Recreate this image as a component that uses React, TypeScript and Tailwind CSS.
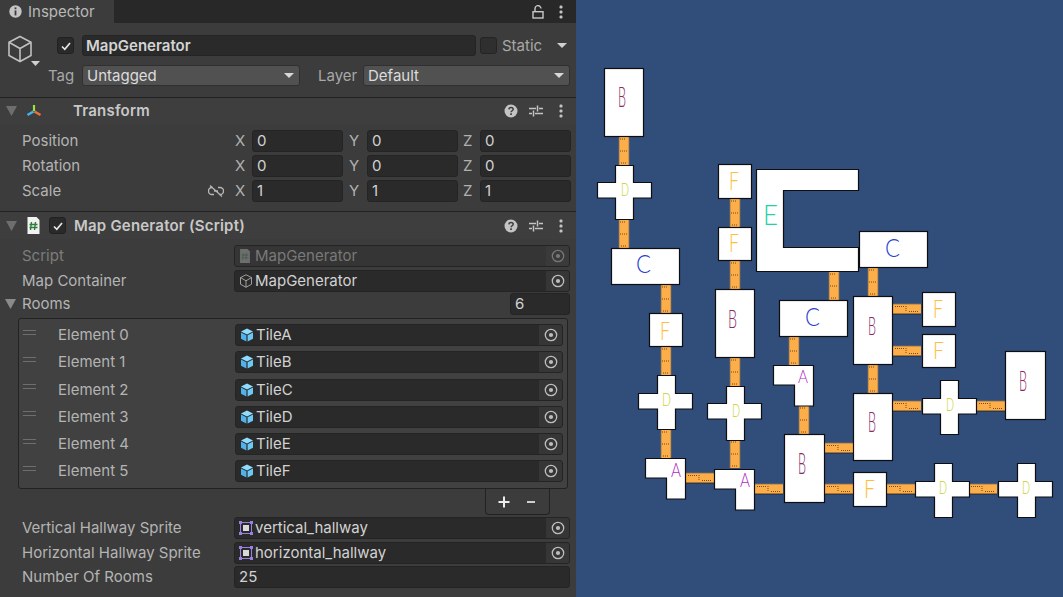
import type { ReactNode } from "react";

const ROOMS = [
  { x: 604, y: 68, w: 40, h: 69 },
  { x: 611, y: 248, w: 69, h: 37 },
  { x: 649, y: 313, w: 34, h: 34 },
  { x: 718, y: 164, w: 34, h: 35 },
  { x: 718, y: 227, w: 34, h: 34 },
  { x: 715, y: 289, w: 40, h: 69 },
  { x: 779, y: 300, w: 69, h: 37 },
  { x: 859, y: 231, w: 69, h: 37 },
  { x: 853, y: 296, w: 40, h: 69 },
  { x: 922, y: 292, w: 34, h: 35 },
  { x: 922, y: 334, w: 34, h: 34 },
  { x: 853, y: 393, w: 40, h: 68 },
  { x: 1005, y: 351, w: 41, h: 69 },
  { x: 784, y: 434, w: 41, h: 69 },
  { x: 853, y: 472, w: 34, h: 35 },
];

// cross centre bar + vertical bar
const CROSSES = [
  { x: 597, y: 165, vx: 615, hy: 182 },
  { x: 638, y: 375, vx: 657, hy: 393 },
  { x: 707, y: 386, vx: 726, hy: 403 },
  { x: 922, y: 380, vx: 940, hy: 398 },
  { x: 915, y: 463, vx: 934, hy: 481 },
  { x: 998, y: 463, vx: 1017, hy: 481 },
];

const ELBOWS = [
  { x: 773, y: 365 },
  { x: 645, y: 458 },
  { x: 714, y: 469 },
];

const V_HALLS = [
  [619, 137], [619, 220], [661, 285], [661, 347], [661, 430], [730, 199], [730, 261],
  [730, 358], [730, 440], [789, 337], [799, 406], [829, 272], [868, 268], [868, 365],
];

const H_HALLS = [
  [686, 473], [755, 484], [825, 443], [825, 484], [887, 484], [969, 484],
  [893, 304], [893, 346], [893, 401], [977, 401],
];

const LETTERS = [
  { t: "B", x: 618, y: 107, w: 8, h: 20, c: "#8b2a66" },
  { t: "D", x: 621, y: 196, w: 8, h: 13, c: "#c4cf20" },
  { t: "C", x: 636, y: 273, w: 15, h: 18, c: "#2c3fd0" },
  { t: "F", x: 660, y: 340, w: 10, h: 18, c: "#fdbe3a" },
  { t: "F", x: 729, y: 190, w: 10, h: 18, c: "#fdbe3a" },
  { t: "F", x: 729, y: 252, w: 10, h: 18, c: "#fdbe3a" },
  { t: "E", x: 763, y: 225, w: 15, h: 20, c: "#22d3a0" },
  { t: "B", x: 728, y: 328, w: 9, h: 19, c: "#8b2a66" },
  { t: "C", x: 805, y: 326, w: 15, h: 19, c: "#2c3fd0" },
  { t: "C", x: 885, y: 257, w: 15, h: 19, c: "#2c3fd0" },
  { t: "B", x: 868, y: 335, w: 8, h: 19, c: "#8b2a66" },
  { t: "F", x: 933, y: 318, w: 10, h: 18, c: "#fdbe3a" },
  { t: "F", x: 933, y: 359, w: 11, h: 17, c: "#fdbe3a" },
  { t: "B", x: 868, y: 432, w: 8, h: 20, c: "#8b2a66" },
  { t: "D", x: 946, y: 411, w: 8, h: 13, c: "#c4cf20" },
  { t: "B", x: 1019, y: 391, w: 8, h: 20, c: "#8b2a66" },
  { t: "D", x: 662, y: 406, w: 9, h: 13, c: "#c4cf20" },
  { t: "D", x: 732, y: 417, w: 8, h: 13, c: "#c4cf20" },
  { t: "A", x: 798, y: 383, w: 10, h: 13, c: "#b02cc4" },
  { t: "A", x: 671, y: 477, w: 10, h: 14, c: "#b02cc4" },
  { t: "A", x: 740, y: 487, w: 10, h: 14, c: "#b02cc4" },
  { t: "B", x: 798, y: 474, w: 8, h: 21, c: "#8b2a66" },
  { t: "F", x: 864, y: 498, w: 11, h: 18, c: "#fdbe3a" },
  { t: "D", x: 939, y: 494, w: 8, h: 12, c: "#c4cf20" },
  { t: "D", x: 1022, y: 494, w: 8, h: 12, c: "#c4cf20" },
];

function HallV({ x, y }: { x: number; y: number }) {
  return (
    <g>
      <rect x={x} y={y} width={10} height={28} fill="#fdae49" />
      <path d={`M${x} ${y}v28M${x + 10} ${y}v28`} stroke="#7d6f58" strokeWidth={0.8} />
      <path
        d={`M${x + 1} ${y + 2}h6M${x + 1} ${y + 14}h8M${x + 2} ${y + 26}h6`}
        stroke="#4a3618"
        strokeWidth={0.8}
        strokeDasharray="1 1"
      />
    </g>
  );
}

function HallH({ x, y }: { x: number; y: number }) {
  return (
    <g>
      <rect x={x} y={y} width={28} height={10} fill="#fdae49" />
      <path d={`M${x} ${y}h28`} stroke="#7d6f58" strokeWidth={0.8} />
      <path d={`M${x} ${y + 10}h28`} stroke="#1c1c1c" strokeWidth={0.8} />
      <path
        d={`M${x + 2} ${y + 2.500}h9M${x + 13} ${y + 2}v6M${x + 16} ${y + 7.500}h10`}
        stroke="#4a3618"
        strokeWidth={0.8}
        strokeDasharray="1 1"
      />
    </g>
  );
}

function MapView() {
  return (
    <svg viewBox="576 0 487 597" className="block h-full w-full">
      {V_HALLS.map(([x, y]) => (
        <HallV key={`v${x}-${y}`} x={x} y={y} />
      ))}
      {H_HALLS.map(([x, y]) => (
        <HallH key={`h${x}-${y}`} x={x} y={y} />
      ))}
      <g fill="#ffffff" stroke="#0d0d12" strokeWidth={1.2}>
        {ROOMS.map((r) => (
          <rect key={`${r.x}-${r.y}`} x={r.x + 0.5} y={r.y + 0.5} width={r.w - 1} height={r.h - 1} />
        ))}
        {CROSSES.map((c) => {
          const l = c.x + 0.5;
          const r = c.x + 54.5;
          const t = c.y + 0.5;
          const b = c.y + 54.5;
          const v1 = c.vx + 0.5;
          const v2 = c.vx + 18.5;
          const h1 = c.hy + 0.5;
          const h2 = c.hy + 16;
          return (
            <polygon
              key={`${c.x}-${c.y}`}
              points={`${v1},${t} ${v2},${t} ${v2},${h1} ${r},${h1} ${r},${h2} ${v2},${h2} ${v2},${b} ${v1},${b} ${v1},${h2} ${l},${h2} ${l},${h1} ${v1},${h1}`}
            />
          );
        })}
        {ELBOWS.map((e) => {
          const l = e.x + 0.5;
          const r = e.x + 40.5;
          const t = e.y + 0.5;
          return (
            <polygon
              key={`${e.x}-${e.y}`}
              points={`${l},${t} ${r},${t} ${r},${t + 40.5} ${l + 21},${t + 40.5} ${l + 21},${t + 19.5} ${l},${t + 19.5}`}
            />
          );
        })}
        <polygon points="756.5,169.5 858.5,169.5 858.5,190.5 783.5,190.5 783.5,247.5 858.5,247.5 858.5,271.5 756.5,271.5" />
      </g>
      {LETTERS.map((l) => (
        <text
          key={`${l.t}-${l.x}-${l.y}`}
          x={l.x}
          y={l.y}
          fill={l.c}
          fontFamily="Lato, Inter, sans-serif"
          fontWeight={300}
          fontSize={l.h / 0.72}
          textLength={l.w}
          lengthAdjust="spacingAndGlyphs"
        >
          {l.t}
        </text>
      ))}
    </svg>
  );
}

function Tri({ className = "" }: { className?: string }) {
  return (
    <svg viewBox="0 0 10 8" preserveAspectRatio="none" className={className}>
      <polygon points="0,0 10,0 5,8" fill="currentColor" />
    </svg>
  );
}

function Target({ dim = false }: { dim?: boolean }) {
  return (
    <svg viewBox="0 0 14 14" className={`h-[14px] w-[14px] ${dim ? "text-[#777]" : "text-[#bdbdbd]"}`}>
      <circle cx="7" cy="7" r="5.7" fill="none" stroke="currentColor" strokeWidth="1.3" />
      <circle cx="7" cy="7" r="2.1" fill="currentColor" />
    </svg>
  );
}

function Check() {
  return (
    <span className="flex h-[17px] w-[17px] items-center justify-center rounded-[3px] border border-[#212121] bg-[#2a2a2a]">
      <svg viewBox="0 0 12 12" className="h-[12px] w-[12px]">
        <path d="M2 6.5l2.8 2.8L10 3" fill="none" stroke="#e6e6e6" strokeWidth="1.7" />
      </svg>
    </span>
  );
}

function Field({ children, target, dim, className = "" }: { children?: ReactNode; target?: boolean; dim?: boolean; className?: string }) {
  return (
    <div
      className={`flex h-[22px] items-center overflow-hidden rounded-[3px] border border-[#242424] ${dim ? "bg-[#353535] text-[#797979]" : "bg-[#2a2a2a] text-[#d2d2d2]"} ${className}`}
    >
      <div className="flex min-w-0 flex-1 items-center gap-[2px] pl-[4px]">{children}</div>
      {target && (
        <div className={`flex h-full w-[23px] items-center justify-center ${dim ? "bg-[#3a3a3a]" : "bg-[#363636]"}`}>
          <Target dim={dim} />
        </div>
      )}
    </div>
  );
}

function Dropdown({ value, className = "" }: { value: string; className?: string }) {
  return (
    <div className={`flex h-[21px] items-center justify-between rounded-[3px] border border-[#303030] bg-[#515151] pl-[4px] pr-[5px] text-[#dcdcdc] ${className}`}>
      <span>{value}</span>
      <Tri className="h-[5px] w-[10px] text-[#d8d8d8]" />
    </div>
  );
}

function HeaderIcons() {
  return (
    <div className="ml-auto flex items-center pr-[13px] text-[#c4c4c4]">
      <svg viewBox="0 0 14 14" className="h-[14px] w-[14px]">
        <circle cx="7" cy="7" r="6.5" fill="#c4c4c4" />
        <path d="M4.9 5.4c.1-1.3 1-2 2.2-2 1.2 0 2.1.7 2.1 1.8 0 1.5-2.1 1.6-2.1 3.1" fill="none" stroke="#3e3e3e" strokeWidth="1.5" />
        <rect x="6.2" y="9.3" width="1.7" height="1.7" fill="#3e3e3e" />
      </svg>
      <svg viewBox="0 0 14 14" className="ml-[11px] h-[14px] w-[14px]">
        <path d="M0 4.5h7M10 4.5h4M0 9.5h3M6 9.5h8M8.5 1.5v6M4.5 6.5v6" fill="none" stroke="#c4c4c4" strokeWidth="1.5" />
      </svg>
      <Dots className="ml-[16px]" />
    </div>
  );
}

function Dots({ className = "" }: { className?: string }) {
  return (
    <svg viewBox="0 0 4 14" className={`h-[14px] w-[4px] ${className}`}>
      <rect x="0.5" y="0.5" width="3" height="3" rx="1.2" fill="#c4c4c4" />
      <rect x="0.5" y="5.5" width="3" height="3" rx="1.2" fill="#c4c4c4" />
      <rect x="0.5" y="10.5" width="3" height="3" rx="1.2" fill="#c4c4c4" />
    </svg>
  );
}

function CubeOutline({ className = "" }: { className?: string }) {
  return (
    <svg viewBox="0 0 26 28" className={className}>
      <path
        d="M13 1.5l11 5.7v13.3L13 26.500 2 20.500V7.200zM2 7.200l11 6.300 11-6.300M13 13.500v13"
        fill="none"
        stroke="currentColor"
        strokeWidth="1.6"
      />
    </svg>
  );
}

function Prefab() {
  return (
    <svg viewBox="0 0 14 14" className="h-[14px] w-[14px] shrink-0">
      <polygon points="7,0.5 13,3.500 7,6.500 1,3.500" fill="#8fdcff" />
      <polygon points="1,4.500 6.400,7.300 6.400,13.500 1,10.700" fill="#4fb3ea" />
      <polygon points="13,4.500 7.600,7.300 7.600,13.500 13,10.700" fill="#6cc8f5" />
    </svg>
  );
}

function SpriteIcon() {
  return (
    <svg viewBox="0 0 14 14" className="h-[14px] w-[14px] shrink-0">
      <rect x="1.5" y="1.5" width="11" height="11" fill="none" stroke="#9a7ee0" strokeWidth="1" />
      <rect x="4" y="4" width="6" height="6" fill="#d8d8d8" />
      <g fill="#9a7ee0">
        <rect x="0" y="0" width="3" height="3" />
        <rect x="11" y="0" width="3" height="3" />
        <rect x="0" y="11" width="3" height="3" />
        <rect x="11" y="11" width="3" height="3" />
      </g>
    </svg>
  );
}

function ScriptIcon({ dim = false }: { dim?: boolean }) {
  return (
    <svg viewBox="0 0 14 17" className="h-full w-full">
      <path d="M1 0h9l3 3v14H1z" fill={dim ? "#6e6e6e" : "#f2f2f2"} />
      <path d="M5 5l-1 8M9 5l-1 8M3 7.500h8M3 10.500h8" fill="none" stroke={dim ? "#4f5f50" : "#2f7d3b"} strokeWidth="1.4" />
    </svg>
  );
}

function PropLabel({ children, dim }: { children: ReactNode; dim?: boolean }) {
  return <span className={`w-[212px] shrink-0 ${dim ? "text-[#7d7d7d]" : "text-[#b4b4b4]"}`}>{children}</span>;
}

function Axis({ label, value, w }: { label: string; value: string; w: string }) {
  return (
    <>
      <span className={`${w} shrink-0 text-[#b0b0b0]`}>{label}</span>
      <Field className="w-[91px]">{value}</Field>
    </>
  );
}

function VectorRow({ label, value, unlink }: { label: string; value: string; unlink?: boolean }) {
  return (
    <div className="flex h-[25px] items-center pl-[22px]">
      <span className="flex w-[213px] shrink-0 items-center justify-between pr-[11px] text-[#b4b4b4]">
        {label}
        {unlink && (
          <svg viewBox="0 0 16 12" className="h-[12px] w-[16px]">
            <path d="M5 2.500H4a3.500 3.500 0 000 7h2M11 9.500h1a3.500 3.500 0 000-7h-2M6 6h4M2 0.500l12 11" fill="none" stroke="#b8b8b8" strokeWidth="1.3" />
          </svg>
        )}
      </span>
      <Axis label="X" value={value} w="w-[17px]" />
      <span className="w-[6px]" />
      <Axis label="Y" value={value} w="w-[18px]" />
      <span className="w-[5px]" />
      <Axis label="Z" value={value} w="w-[17px]" />
    </div>
  );
}

const ELEMENTS = ["TileA", "TileB", "TileC", "TileD", "TileE", "TileF"];

function Inspector() {
  return (
    <div className="flex h-[597px] w-[576px] shrink-0 flex-col overflow-hidden bg-[#3c3c3c] font-[Inter,sans-serif] text-[15px] leading-[18px]">
      {/* Tab bar */}
      <div className="flex h-[23px] shrink-0 items-center bg-[#282828]">
        <div className="flex h-full w-[114px] items-center gap-[6px] bg-[#3c3c3c] pl-[9px] text-[#c4c4c4]">
          <svg viewBox="0 0 13 13" className="h-[13px] w-[13px]">
            <circle cx="6.500" cy="6.500" r="6.200" fill="#c4c4c4" />
            <rect x="5.600" y="2.400" width="1.800" height="1.800" fill="#3c3c3c" />
            <rect x="5.600" y="5.400" width="1.800" height="5" fill="#3c3c3c" />
          </svg>
          <span className="text-[#b8b8b8]">Inspector</span>
        </div>
        <div className="ml-auto flex items-center gap-[15px] pr-[13px]">
          <svg viewBox="0 0 12 14" className="h-[14px] w-[12px]">
            <path d="M3 6.500V3.800a3 3 0 016-0.300" fill="none" stroke="#c8c8c8" strokeWidth="1.4" />
            <rect x="1" y="6.700" width="10" height="6.300" fill="none" stroke="#c8c8c8" strokeWidth="1.400" />
          </svg>
          <Dots />
        </div>
      </div>

      {/* GameObject header */}
      <div className="flex h-[75px] shrink-0 border-b border-[#222] pt-[12px]">
        <div className="relative ml-[7px] w-[28px] shrink-0">
          <CubeOutline className="h-[28px] w-[26px] text-[#c0c0c0]" />
          <Tri className="absolute left-[24px] top-[26px] h-[5px] w-[9px] text-[#d0d0d0]" />
        </div>
        <div className="flex flex-1 flex-col gap-[9px] pr-[6px]">
          <div className="flex h-[21px] items-center">
            <span className="ml-[22px]"><Check /></span>
            <div className="ml-[8px] flex h-[21px] w-[394px] items-center rounded-[3px] border border-[#242424] bg-[#2a2a2a] pl-[3px] font-semibold text-[#d4d4d4]">
              MapGenerator
            </div>
            <span className="ml-[4px] h-[17px] w-[17px] rounded-[3px] border border-[#242424] bg-[#2f2f2f]" />
            <span className="ml-[5px] text-[#a8a8a8]">Static</span>
            <Tri className="ml-[15px] h-[5px] w-[10px] text-[#d0d0d0]" />
          </div>
          <div className="flex h-[21px] items-center">
            <span className="ml-[13px] w-[34px] text-[#a8a8a8]">Tag</span>
            <Dropdown value="Untagged" className="w-[218px]" />
            <span className="ml-[18px] w-[45px] text-[#a8a8a8]">Layer</span>
            <Dropdown value="Default" className="w-[207px]" />
          </div>
        </div>
      </div>

      {/* Transform */}
      <div className="flex h-[26px] shrink-0 items-center bg-[#3e3e3e]">
        <Tri className="ml-[6px] h-[10px] w-[11px] text-[#6e6e6e]" />
        <svg viewBox="0 0 16 14" className="ml-[9px] h-[14px] w-[16px]">
          <path d="M8 7V1" stroke="#9de23c" strokeWidth="2.200" />
          <path d="M7.500 7.500L1.500 11" stroke="#3fb6f0" strokeWidth="2.500" />
          <path d="M8.500 7.500L14.500 11" stroke="#f0703c" strokeWidth="2.500" />
        </svg>
        <span className="ml-[31px] font-semibold tracking-[0.2px] text-[#c8c8c8]">Transform</span>
        <HeaderIcons />
      </div>
      <div className="flex h-[88px] shrink-0 flex-col border-b border-[#222] pt-[4px]">
        <VectorRow label="Position" value="0" />
        <VectorRow label="Rotation" value="0" />
        <VectorRow label="Scale" value="1" unlink />
      </div>

      {/* Script component */}
      <div className="flex h-[27px] shrink-0 items-center bg-[#3e3e3e]">
        <Tri className="ml-[6px] h-[10px] w-[11px] text-[#6e6e6e]" />
        <span className="ml-[9px] h-[17px] w-[15px]"><ScriptIcon /></span>
        <span className="ml-[8px]"><Check /></span>
        <span className="ml-[8px] font-semibold tracking-[0.2px] text-[#c8c8c8]">Map Generator (Script)</span>
        <HeaderIcons />
      </div>
      <div className="flex flex-col pt-[4px]">
        <div className="flex h-[25px] items-center pl-[22px] pr-[6px]">
          <PropLabel dim>Script</PropLabel>
          <Field dim target className="flex-1">
            <span className="h-[14px] w-[12px] shrink-0"><ScriptIcon dim /></span>
            <span className="ml-[2px]">MapGenerator</span>
          </Field>
        </div>
        <div className="flex h-[25px] items-center pl-[22px] pr-[6px]">
          <PropLabel>Map Container</PropLabel>
          <Field target className="flex-1">
            <CubeOutline className="h-[14px] w-[14px] shrink-0 text-[#bdbdbd]" />
            MapGenerator
          </Field>
        </div>
        <div className="flex h-[22px] items-center pr-[6px]">
          <Tri className="ml-[5px] h-[10px] w-[11px] text-[#8a8a8a]" />
          <span className="ml-[6px] text-[#b4b4b4]">Rooms</span>
          <Field className="ml-auto w-[60px]">6</Field>
        </div>

        {/* Reorderable list */}
        <div className="ml-[18px] mt-[3px] flex h-[171px] w-[550px] flex-col gap-[5.300px] rounded-[3px] border border-[#222] bg-[#414141] pt-[5px]">
          {ELEMENTS.map((name, i) => (
            <div key={name} className="flex h-[22px] items-center pl-[4px] pr-[4px]">
              <span className="mb-[6px] h-[5px] w-[13px] border-y border-[#6e6e6e]" />
              <span className="ml-[22px] w-[177px] text-[#b4b4b4]">Element {i}</span>
              <Field target className="flex-1">
                <Prefab />
                {name}
              </Field>
            </div>
          ))}
        </div>
        <div className="ml-[485px] flex h-[26px] w-[65px] items-center rounded-b-[4px] border-x border-b border-[#222] bg-[#3c3c3c] pl-[12px] font-semibold text-[#e8e8e8]">
          <svg viewBox="0 0 12 12" className="h-[12px] w-[12px]">
            <path d="M6 0.500v11M0.500 6h11" stroke="#ececec" strokeWidth="2" />
          </svg>
          <svg viewBox="0 0 10 12" className="ml-[16px] h-[12px] w-[10px]">
            <path d="M1 6h8" stroke="#cfcfcf" strokeWidth="2" />
          </svg>
        </div>
        <div className="flex h-[25px] items-center pl-[22px] pr-[6px]">
          <PropLabel>Vertical Hallway Sprite</PropLabel>
          <Field target className="flex-1">
            <SpriteIcon />
            vertical_hallway
          </Field>
        </div>
        <div className="flex h-[25px] items-center pl-[22px] pr-[6px]">
          <PropLabel>Horizontal Hallway Sprite</PropLabel>
          <Field target className="flex-1">
            <SpriteIcon />
            horizontal_hallway
          </Field>
        </div>
        <div className="flex h-[24px] items-center pl-[22px] pr-[6px]">
          <PropLabel>Number Of Rooms</PropLabel>
          <Field className="flex-1">25</Field>
        </div>
      </div>
    </div>
  );
}

export default function App() {
  return (
    <div className="flex h-[597px] w-[1063px] overflow-hidden">
      <Inspector />
      <div className="flex-1 bg-[#314d79]">
        <MapView />
      </div>
    </div>
  );
}
